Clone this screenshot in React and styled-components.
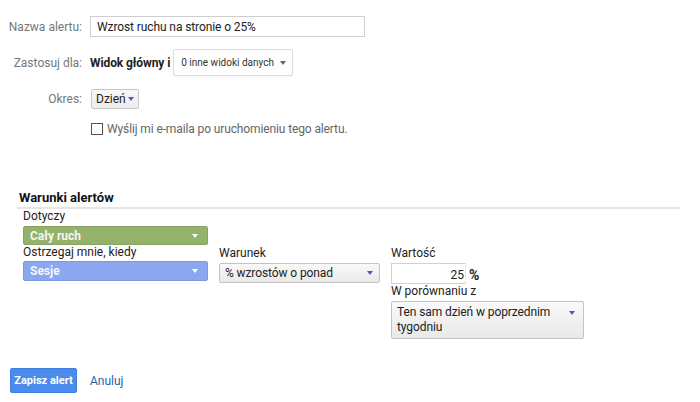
import React from "react";
import styled, { createGlobalStyle } from "styled-components";

const Global = createGlobalStyle`
  html, body { margin: 0; padding: 0; background: #fff; }
  body { font-family: Roboto, "Noto Sans", Arial, sans-serif; color: #222; }
  * { box-sizing: border-box; }
`;

const Page = styled.div`
  width: 700px;
  height: 402px;
  padding-top: 16px;
  position: relative;
  overflow: hidden;
`;

const Row = styled.div`
  display: flex;
  align-items: center;
  height: ${(p) => p.$h}px;
  margin-top: ${(p) => p.$mt || 0}px;
`;

const Label = styled.div`
  width: 82px;
  text-align: right;
  font-size: 12px;
  color: #777;
  margin-right: 8px;
  flex: none;
`;

const TextInput = styled.div`
  width: 275px;
  height: 21px;
  border: 1px solid #cfcfcf;
  display: flex;
  align-items: center;
  padding-left: 6px;
  font-size: 12px;
  color: #222;
  letter-spacing: -0.1px;
`;

const Bold = styled.span`
  font-weight: 700;
  font-size: 12px;
  color: #222;
  margin-right: 3px;
  letter-spacing: -0.1px;
`;

const Arrow = styled.span`
  width: 0;
  height: 0;
  border-left: 3.5px solid transparent;
  border-right: 3.5px solid transparent;
  border-top: 4px solid ${(p) => p.$c || "#555"};
  display: inline-block;
  flex: none;
`;

const ViewsSelect = styled.div`
  width: 120px;
  height: 27px;
  border: 1px solid #dcdcdc;
  border-radius: 2px;
  display: flex;
  align-items: center;
  justify-content: space-between;
  padding: 0 6px 0 7px;
  font-size: 10px;
  color: #333;
  box-shadow: 0 1px 1px rgba(0, 0, 0, 0.04);
`;

const SmallButton = styled.div`
  margin-left: 1px;
  height: 20px;
  padding: 0 4px 0 4px;
  border: 1px solid #c6c6c6;
  border-radius: 2px;
  background: linear-gradient(#f8f8f8, #ececec);
  display: flex;
  align-items: center;
  gap: 2px;
  font-size: 12px;
  color: #222;
`;

const CheckRow = styled.label`
  display: flex;
  align-items: center;
  margin-left: 91px;
  margin-top: 13px;
  height: 13px;
  font-size: 12px;
  letter-spacing: -0.12px;
  color: #666;
  gap: 4px;
`;

const Box = styled.span`
  width: 12px;
  height: 12px;
  border: 1px solid #555;
  background: #fff;
  flex: none;
`;

const Section = styled.div`
  margin: 55px 20px 0 17px;
`;

const SectionTitle = styled.div`
  font-size: 13px;
  font-weight: 700;
  color: #111;
  line-height: 16px;
  padding: 0 0 1px 2px;
  border-bottom: 2px solid #e6e6e6;
`;

const Conditions = styled.div`
  padding-left: 6px;
  display: flex;
  flex-direction: column;
`;

const FieldLabel = styled.div`
  font-size: 12px;
  line-height: 14px;
  color: #222;
  margin-bottom: ${(p) => p.$mb ?? 2}px;
`;

const ColorSelect = styled.div`
  width: 185px;
  height: ${(p) => p.$h}px;
  background: ${(p) => p.$bg};
  border: 1px solid ${(p) => p.$bd};
  border-radius: 2px;
  display: flex;
  align-items: center;
  justify-content: space-between;
  padding: 0 9px 0 6px;
  font-size: 12px;
  font-weight: 700;
  color: rgba(255, 255, 255, 0.92);
`;

const CondRow = styled.div`
  display: flex;
  align-items: flex-start;
`;

const Col = styled.div`
  width: ${(p) => p.$w}px;
  margin-right: ${(p) => p.$mr || 0}px;
  margin-top: ${(p) => p.$mt || 0}px;
  display: flex;
  flex-direction: column;
`;

const GraySelect = styled.div`
  width: ${(p) => p.$w}px;
  padding: ${(p) => (p.$multi ? "3px 8px 3px 5px" : "0 6px 0 5px")};
  height: ${(p) => (p.$multi ? "auto" : "20px")};
  border: 1px solid #c4c4c4;
  border-radius: 2px;
  background: linear-gradient(#f9f9f9, #e9e9e9);
  display: flex;
  align-items: ${(p) => (p.$multi ? "flex-start" : "center")};
  justify-content: space-between;
  font-size: 12px;
  line-height: 15px;
  letter-spacing: -0.1px;
  color: #222;
  & > span:first-child {
    width: 165px;
  }
  ${Arrow} {
    margin-top: ${(p) => (p.$multi ? "6px" : "0")};
  }
`;

const ValueLine = styled.div`
  display: flex;
  align-items: flex-end;
`;

const ValueInput = styled.div`
  width: 75px;
  height: 21px;
  border: 1px solid #d2d2d2;
  border-right-color: #e8e8e8;
  text-align: right;
  font-size: 12px;
  line-height: 23px;
  padding-right: 1px;
  color: #222;
`;

const Percent = styled.span`
  font-size: 14px;
  font-weight: 700;
  margin-left: 3px;
  line-height: 17px;
`;

const Actions = styled.div`
  display: flex;
  align-items: center;
  margin: 29px 0 0 10px;
  gap: 13px;
`;

const Primary = styled.button`
  width: 67px;
  height: 25px;
  border: 1px solid #3f7fe3;
  border-radius: 2px;
  background: #4a8bec;
  color: #fff;
  font-family: inherit;
  font-size: 11px;
  font-weight: 700;
  padding: 0;
`;

const Link = styled.a`
  font-size: 12px;
  color: #2c5ea8;
  text-decoration: none;
`;

export default function App() {
  return (
    <>
      <Global />
      <Page>
        <Row $h={21}>
          <Label>Nazwa alertu:</Label>
          <TextInput>Wzrost ruchu na stronie o 25%</TextInput>
        </Row>
        <Row $h={27} $mt={12}>
          <Label>Zastosuj dla:</Label>
          <Bold>Widok główny i</Bold>
          <ViewsSelect>
            <span>0 inne widoki danych</span>
            <Arrow $c="#666" />
          </ViewsSelect>
        </Row>
        <Row $h={20} $mt={13}>
          <Label>Okres:</Label>
          <SmallButton>
            Dzień <Arrow $c="#4d5fa8" />
          </SmallButton>
        </Row>
        <CheckRow>
          <Box />
          Wyślij mi e-maila po uruchomieniu tego alertu.
        </CheckRow>

        <Section>
          <SectionTitle>Warunki alertów</SectionTitle>
          <Conditions>
            <FieldLabel $mb={3}>Dotyczy</FieldLabel>
            <ColorSelect $h={19} $bg="#94b26c" $bd="#86a45f">
              <span>Cały ruch</span>
              <Arrow $c="#fff" />
            </ColorSelect>
            <CondRow>
              <Col $w={185} $mr={11}>
                <FieldLabel $mb={2}>Ostrzegaj mnie, kiedy</FieldLabel>
                <ColorSelect $h={20} $bg="#8ba7ef" $bd="#7b97e2">
                  <span>Sesje</span>
                  <Arrow $c="#fff" />
                </ColorSelect>
              </Col>
              <Col $w={161} $mr={11} $mt={1}>
                <FieldLabel $mb={3}>Warunek</FieldLabel>
                <GraySelect $w={161}>
                  <span>% wzrostów o ponad</span>
                  <Arrow $c="#4d5fa8" />
                </GraySelect>
              </Col>
              <Col $w={193} $mt={1}>
                <FieldLabel $mb={3}>Wartość</FieldLabel>
                <ValueLine>
                  <ValueInput>25</ValueInput>
                  <Percent>%</Percent>
                </ValueLine>
                <FieldLabel $mb={3}>W porównaniu z</FieldLabel>
                <GraySelect $w={193} $multi>
                  <span>Ten sam dzień w poprzednim tygodniu</span>
                  <Arrow $c="#4d5fa8" />
                </GraySelect>
              </Col>
            </CondRow>
          </Conditions>
        </Section>

        <Actions>
          <Primary>Zapisz alert</Primary>
          <Link href="#">Anuluj</Link>
        </Actions>
      </Page>
    </>
  );
}
